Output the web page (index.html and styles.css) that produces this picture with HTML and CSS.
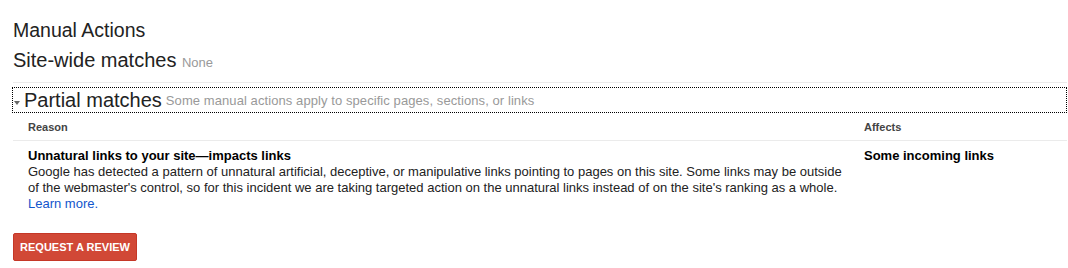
FILE: index.html
```html
<!DOCTYPE html>
<html>
<head>
<meta charset="utf-8">
<link rel="stylesheet" href="styles.css">
</head>
<body>
<div class="page">
  <h1 class="title">Manual Actions</h1>
  <h2 class="section">Site-wide matches <span class="note">None</span></h2>
  <div class="sep"></div>
  <div class="partial">
    <span class="tri"></span>
    <h2 class="section inline">Partial matches</h2>
    <span class="desc">Some manual actions apply to specific pages, sections, or links</span>
  </div>
  <div class="table">
    <div class="thead">
      <div class="c-reason">Reason</div>
      <div class="c-affects">Affects</div>
    </div>
    <div class="row">
      <div class="c-reason">
        <div class="r-title">Unnatural links to your site—impacts links</div>
        <div class="r-text">Google has detected a pattern of unnatural artificial, deceptive, or manipulative links pointing to pages on this site. Some links may be outside of the webmaster's control, so for this incident we are taking targeted action on the unnatural links instead of on the site's ranking as a whole.<br><a href="#" class="link">Learn more.</a></div>
      </div>
      <div class="c-affects"><div class="r-title">Some incoming links</div></div>
    </div>
  </div>
  <button class="btn">REQUEST A REVIEW</button>
</div>
</body>
</html>
```
FILE: styles.css
```css
html, body { margin: 0; padding: 0; background: #fff; }
body { font-family: "Liberation Sans", Arial, sans-serif; color: #222; }
.page { padding: 18px 1px 0 13px; }
.title { font-size: 19.5px; font-weight: normal; margin: 0; line-height: 24px; height: 24px; color: #222; }
.section { font-size: 20px; font-weight: normal; margin: 6px 0 0; line-height: 24px; height: 24px; color: #222; }
.section.inline { display: inline; margin: 0; height: auto; }
.note { font-size: 13px; color: #999; line-height: 1; }
.sep { height: 1px; background: #ebebeb; margin-top: 10px; }
.partial { margin: 4px 0 0 -1px; border: 1px dotted #000; height: 24px; display: flex; align-items: flex-end; line-height: 24px; }
.tri { width: 0; height: 0; border-left: 3px solid transparent; border-right: 3px solid transparent; border-top: 4px solid #666; margin: 0 4px 7px 1px; }
.desc { font-size: 13px; color: #999; margin-left: 4px; line-height: 23px; letter-spacing: 0.08px; }
.thead { display: flex; font-size: 11px; font-weight: bold; color: #444; height: 27px; align-items: center; border-bottom: 1px solid #ebebeb; }
.c-reason { flex: 0 0 824px; padding: 0 12px 0 15px; }
.c-affects { flex: 1; }
.row { display: flex; padding-top: 7px; font-size: 13px; line-height: 16px; }
.r-title { font-weight: bold; color: #000; }
.r-text { color: #222; }
.link { color: #15c; text-decoration: none; }
.btn { margin-top: 21px; width: 124px; height: 28px; background: #d14836; border: 1px solid #c53727; border-radius: 2px; color: #fff; font-family: "Liberation Sans", Arial, sans-serif; font-size: 11px; font-weight: bold; padding: 0; display: block; }
```
